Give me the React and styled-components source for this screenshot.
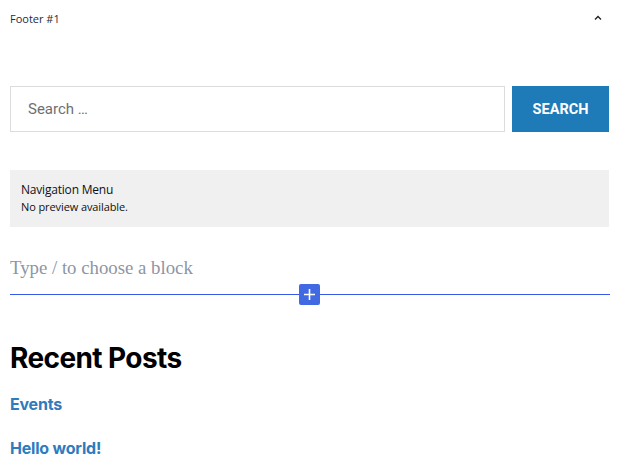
import React from 'react';
import styled, { createGlobalStyle } from 'styled-components';

const GlobalStyle = createGlobalStyle`
  html, body { margin: 0; padding: 0; background: #fff; }
  body { font-family: 'Noto Sans', sans-serif; }
  * { box-sizing: border-box; }
`;

const Page = styled.div`
  width: 619px;
  padding: 0 10px 0 10px;
`;

const Header = styled.div`
  display: flex;
  align-items: center;
  justify-content: space-between;
  height: 36px;
  padding-right: 5px;
  font-family: 'Open Sans', sans-serif;
  font-size: 11px;
  color: #1d2b45;
`;

const Chevron = styled.svg`
  width: 12px;
  height: 12px;
`;

const SearchRow = styled.form`
  display: flex;
  gap: 7px;
  margin-top: 50px;
  height: 46px;
`;

const SearchInput = styled.div`
  flex: 1;
  border: 1px solid #dcdcdc;
  display: flex;
  align-items: center;
  padding-left: 17px;
  font-family: Roboto, sans-serif;
  font-size: 15px;
  color: #6f6f6f;
`;

const SearchButton = styled.div`
  width: 97px;
  background: #1f7ab8;
  color: #fff;
  display: flex;
  align-items: center;
  justify-content: center;
  font-family: Roboto, sans-serif;
  font-weight: 700;
  font-size: 14.5px;
`;

const Placeholder = styled.div`
  margin-top: 38px;
  background: #f0f0f0;
  height: 57px;
  padding: 12px 11px;
  font-family: 'Open Sans', sans-serif;
  color: #111;
`;

const PlaceholderTitle = styled.div`
  font-size: 12px;
  line-height: 16px;
  letter-spacing: -0.2px;
`;

const PlaceholderText = styled.div`
  font-size: 11px;
  line-height: 18px;
  letter-spacing: -0.1px;
`;

const Appender = styled.div`
  position: relative;
  margin-top: 25px;
  height: 43px;
  font-family: 'Liberation Serif', 'DejaVu Serif', serif;
  font-size: 18.8px;
  color: #8d95a5;
  padding-top: 5px;
  margin-right: -1px;
`;

const InsertLine = styled.div`
  position: absolute;
  left: 0;
  right: 0;
  bottom: 0;
  height: 1px;
  background: #3858e9;
`;

const PlusButton = styled.div`
  position: absolute;
  left: 289px;
  bottom: -10px;
  width: 21px;
  height: 21px;
  background: #4169e1;
  border-radius: 2px;
  display: flex;
  align-items: center;
  justify-content: center;
`;

const Heading = styled.h2`
  margin: 46px 0 0 0;
  font-family: Inter, sans-serif;
  font-weight: 700;
  font-size: 28px;
  letter-spacing: -0.6px;
  line-height: 34px;
  color: #000;
`;

const PostList = styled.ul`
  list-style: none;
  margin: 18px 0 0 0;
  padding: 0;
  display: flex;
  flex-direction: column;
  gap: 22px;
`;

const PostLink = styled.a`
  font-family: Inter, sans-serif;
  font-weight: 700;
  font-size: 16px;
  line-height: 21px;
  color: #2e7bbd;
  text-decoration: none;
  letter-spacing: -0.2px;
`;

export default function App() {
  return (
    <>
      <GlobalStyle />
      <Page>
        <Header>
          <span>Footer #1</span>
          <Chevron viewBox="0 0 24 24" fill="none" stroke="#1e1e1e" strokeWidth="2.5">
            <path d="M6 15l6-6 6 6" />
          </Chevron>
        </Header>
        <SearchRow>
          <SearchInput>Search …</SearchInput>
          <SearchButton>SEARCH</SearchButton>
        </SearchRow>
        <Placeholder>
          <PlaceholderTitle>Navigation Menu</PlaceholderTitle>
          <PlaceholderText>No preview available.</PlaceholderText>
        </Placeholder>
        <Appender>
          Type / to choose a block
          <InsertLine />
          <PlusButton>
            <svg width="13" height="13" viewBox="0 0 13 13" stroke="#fff" strokeWidth="1.6">
              <path d="M6.5 1v11M1 6.5h11" />
            </svg>
          </PlusButton>
        </Appender>
        <Heading>Recent Posts</Heading>
        <PostList>
          <li><PostLink href="#">Events</PostLink></li>
          <li><PostLink href="#">Hello world!</PostLink></li>
        </PostList>
      </Page>
    </>
  );
}
